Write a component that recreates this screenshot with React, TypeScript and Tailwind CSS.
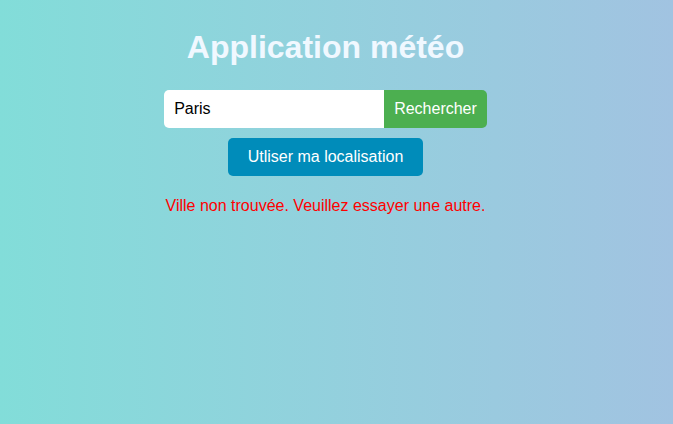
export default function App() {
  return (
    <div
      className="min-h-[424px] w-full bg-gradient-to-r from-[#82ddd9] to-[#a1c3e1] pr-[22px] text-center"
      style={{ fontFamily: '"Liberation Sans", Arial, sans-serif' }}
    >
      <h1 className="pt-[29px] text-[32px] font-bold leading-[37px] text-[#f0f8ff]">
        Application météo
      </h1>
      <div className="mt-[24px] flex justify-center">
        <input
          className="h-[38px] w-[220px] rounded-l-[5px] bg-white px-[10px] text-[16px] text-black outline-none"
          defaultValue="Paris"
        />
        <button className="h-[38px] rounded-r-[5px] bg-[#4caf50] px-[10px] text-[16px] text-white">
          Rechercher
        </button>
      </div>
      <div className="mt-[10px] flex justify-center">
        <button className="h-[38px] rounded-[5px] bg-[#008cba] px-[20px] text-[16px] text-white">
          Utliser ma localisation
        </button>
      </div>
      <p className="mt-[18px] text-[16px] text-[#ff0000]">
        Ville non trouvée. Veuillez essayer une autre.
      </p>
    </div>
  );
}
